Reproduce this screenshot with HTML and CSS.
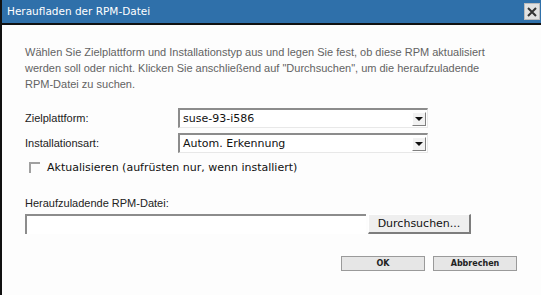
FILE: index.html
```html
<!DOCTYPE html>
<html lang="de">
<head>
    <meta charset="UTF-8">
    <title>Heraufladen der RPM-Datei</title>
    <link rel="stylesheet" href="styles.css">
</head>
<body>
    <div class="dialog">
        <div class="titlebar">
            <span class="title">Heraufladen der RPM-Datei</span>
            <span class="close">
                <svg width="10" height="10" viewBox="0 0 10 10"><path d="M1 1L9 9M9 1L1 9" stroke="#333" stroke-width="2"/></svg>
            </span>
        </div>

        <div class="content">
            <p class="intro">Wählen Sie Zielplattform und Installationstyp aus und legen Sie fest, ob diese RPM aktualisiert werden soll oder nicht. Klicken Sie anschließend auf "Durchsuchen", um die heraufzuladende RPM-Datei zu suchen.</p>

            <div class="form-grid">
                <label class="field-label">Zielplattform:</label>
                <div class="select"><span class="select-text">suse-93-i586</span><span class="arrow"></span></div>

                <label class="field-label">Installationsart:</label>
                <div class="select"><span class="select-text">Autom. Erkennung</span><span class="arrow"></span></div>
            </div>

            <div class="check-row">
                <span class="checkbox"></span>
                <span class="check-label">Aktualisieren (aufrüsten nur, wenn installiert)</span>
            </div>

            <div class="file-label">Heraufzuladende RPM-Datei:</div>
            <div class="file-row">
                <div class="file-input"></div>
                <button class="browse">Durchsuchen...</button>
            </div>

            <div class="actions">
                <button class="btn">OK</button>
                <button class="btn">Abbrechen</button>
            </div>
        </div>
    </div>
</body>
</html>
```

FILE: styles.css
```css
html, body {
    margin: 0;
    padding: 0;
    background-color: #fdfdfd;
}

.dialog {
    width: 539px;
    height: 295px;
    border-left: 2px solid #111;
    background-color: #fdfdfd;
}

.titlebar {
    height: 23px;
    border-bottom: 2px solid #111;
    background-color: #2f70aa;
    display: flex;
    align-items: center;
    justify-content: space-between;
    padding: 0 1px 0 5px;
}

.title {
    color: white;
    font-family: "DejaVu Sans", sans-serif;
    font-size: 10.5px;
    margin-top: -1px;
}

.close {
    width: 14px;
    height: 15px;
    background-color: #e2e2e2;
    border: 1px solid #bbb;
    display: flex;
    align-items: center;
    justify-content: center;
}

.content {
    padding: 19px 0 0 23px;
}

.intro {
    margin: 0;
    width: 480px;
    font-family: "Liberation Sans", Arial, sans-serif;
    font-size: 11px;
    line-height: 16px;
    color: #636363;
}

.form-grid {
    display: grid;
    grid-template-columns: 153px 250px;
    row-gap: 5px;
    align-items: center;
    margin-top: 16px;
}

.field-label {
    font-family: "Liberation Sans", Arial, sans-serif;
    font-size: 11px;
    color: #222;
}

.select {
    height: 17px;
    border-top: 2px solid #8c8c8c;
    border-left: 2px solid #8c8c8c;
    border-right: 1px solid #e8e8e8;
    border-bottom: 1px solid #e8e8e8;
    background-color: white;
    display: flex;
    align-items: center;
    justify-content: space-between;
}

.select-text {
    font-family: "DejaVu Sans", sans-serif;
    font-size: 11px;
    color: #111;
    padding-left: 3px;
}

.arrow {
    width: 14px;
    height: 14px;
    margin-right: 1px;
    box-sizing: border-box;
    background-color: #f2f2f2;
    border-top: 1px solid #fff;
    border-left: 1px solid #fff;
    border-right: 1px solid #808080;
    border-bottom: 1px solid #808080;
    display: flex;
    align-items: center;
    justify-content: center;
}

.arrow::after {
    content: "";
    border-left: 4px solid transparent;
    border-right: 4px solid transparent;
    border-top: 4px solid #111;
}

.check-row {
    display: flex;
    align-items: center;
    margin-top: 8px;
    padding-left: 4px;
}

.checkbox {
    width: 9px;
    height: 9px;
    border-top: 2px solid #a0a0a0;
    border-left: 2px solid #a0a0a0;
    margin-right: 7px;
}

.check-label {
    font-family: "DejaVu Sans", sans-serif;
    font-size: 11px;
    color: #111;
}

.file-label {
    margin-top: 23px;
    font-family: "Liberation Sans", Arial, sans-serif;
    font-size: 11px;
    color: #222;
}

.file-row {
    display: flex;
    margin-top: 5px;
}

.file-input {
    width: 339px;
    height: 18px;
    border-top: 2px solid #8c8c8c;
    border-left: 2px solid #8c8c8c;
    background-color: white;
}

.browse {
    width: 103px;
    height: 20px;
    margin-left: 2px;
    padding: 0;
    background-color: #efefef;
    border-top: 1px solid #fff;
    border-left: 1px solid #fff;
    border-right: 2px solid #7d7d7d;
    border-bottom: 2px solid #7d7d7d;
    font-family: "DejaVu Sans", sans-serif;
    font-size: 11px;
    color: #111;
}

.actions {
    display: flex;
    gap: 8px;
    margin-top: 22px;
    padding-left: 316px;
}

.btn {
    width: 84px;
    height: 15px;
    padding: 0;
    background-color: #e6e6e6;
    border: 1px solid #9a9a9a;
    font-family: "DejaVu Sans", sans-serif;
    font-size: 8px;
    font-weight: bold;
    color: #222;
}
```
